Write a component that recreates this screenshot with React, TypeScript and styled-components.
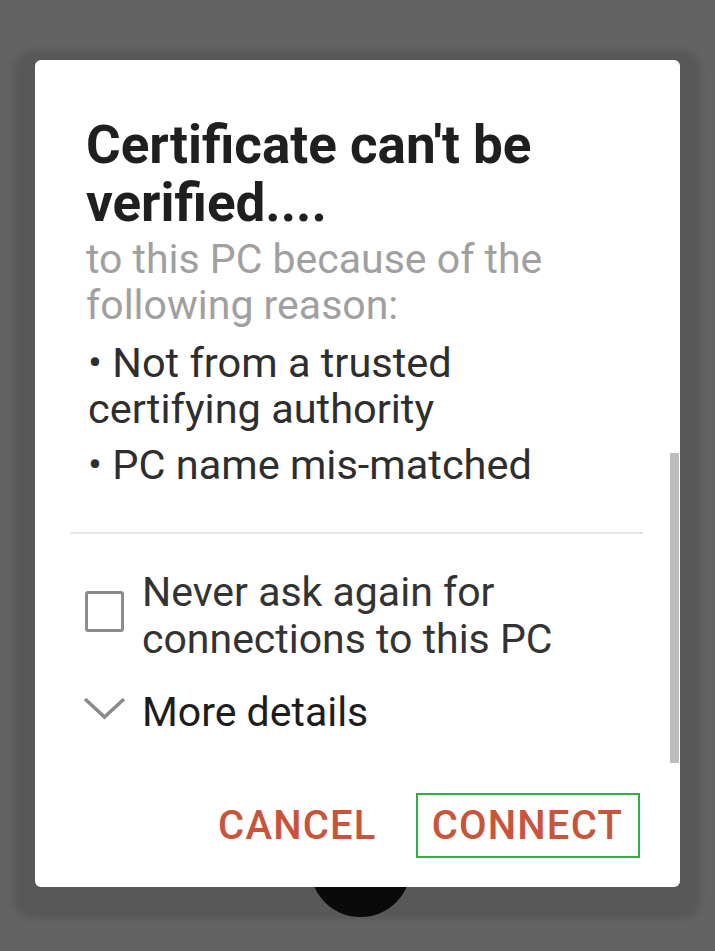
import styled, { createGlobalStyle } from "styled-components";

const GlobalStyle = createGlobalStyle`
  html, body {
    margin: 0;
    padding: 0;
    background: #636363;
    font-family: Roboto, "Noto Sans", "Liberation Sans", sans-serif;
  }
`;

const Screen = styled.div`
  position: relative;
  width: 715px;
  height: 951px;
  overflow: hidden;
  padding: 60px 0 0 35px;
  box-sizing: border-box;
`;

// FAB peeking out underneath the dialog
const Fab = styled.div`
  position: absolute;
  left: 310px;
  top: 816px;
  width: 101px;
  height: 101px;
  border-radius: 50%;
  background: #0c0c0c;
`;

const Dialog = styled.div`
  position: relative;
  z-index: 1;
  width: 645px;
  height: 827px;
  background: #fff;
  border-radius: 6px;
  box-shadow: 0 11px 6px 21px rgba(0, 0, 0, 0.11);
  display: flex;
  flex-direction: column;
  box-sizing: border-box;
  padding-top: 56px;
`;

const ScrollThumb = styled.div`
  position: absolute;
  right: 1px;
  top: 393px;
  width: 9px;
  height: 310px;
  background: #bdbdbd;
`;

const Body = styled.div`
  padding: 0 90px 0 51px;
`;

const Title = styled.h1`
  margin: 0;
  font-size: 53px;
  line-height: 58px;
  font-weight: 700;
  color: #1f1f1f;
`;

const Lead = styled.p`
  margin: 4px 0 0;
  font-size: 41px;
  line-height: 46px;
  color: #a0a0a0;
`;

const Reasons = styled.ul`
  list-style: none;
  margin: 12px 0 0;
  padding: 0 0 0 2px;
  display: flex;
  flex-direction: column;
  gap: 10px;
`;

const Reason = styled.li`
  font-size: 41.5px;
  line-height: 46px;
  color: #2e2e2e;
`;

const Divider = styled.hr`
  margin: 44px 37px 0 35px;
  border: none;
  height: 2px;
  background: #e4e4e4;
`;

const Options = styled.div`
  padding: 35px 0 0 50px;
  display: flex;
  flex-direction: column;
  gap: 26px;
`;

const OptionRow = styled.label<{ $dark?: boolean }>`
  display: flex;
  align-items: flex-start;
  gap: 18px;
  font-size: 41px;
  line-height: 47px;
  color: ${(p) => (p.$dark ? "#1c1c1c" : "#333")};
`;

const Check = styled.span`
  flex: none;
  margin-top: 22px;
  width: 33px;
  height: 35px;
  border: 3px solid #8c8c8c;
  border-radius: 3px;
`;

const Chevron = styled.svg`
  flex: none;
  width: 43px;
  height: 24px;
  margin: 7px -2px 0 -2px;
`;

const Actions = styled.div`
  margin-top: auto;
  display: flex;
  justify-content: flex-end;
  gap: 22px;
  padding: 0 40px 29px 0;
`;

const Button = styled.button<{ $focused?: boolean }>`
  background: none;
  border: 2px solid ${(p) => (p.$focused ? "#2bb04a" : "transparent")};
  padding: 0 15px 0 14px;
  height: 65px;
  font-family: Roboto, "Noto Sans", sans-serif;
  font-size: 40px;
  font-weight: 500;
  color: #c8553b;
  letter-spacing: 1.2px;
`;

export default function App() {
  return (
    <>
      <GlobalStyle />
      <Screen>
        <Fab />
        <Dialog>
          <ScrollThumb />
          <Body>
            <Title>Certificate can't be verified....</Title>
            <Lead>to this PC because of the following reason:</Lead>
            <Reasons>
              <Reason>• Not from a trusted certifying authority</Reason>
              <Reason>• PC name mis-matched</Reason>
            </Reasons>
          </Body>
          <Divider />
          <Options>
            <OptionRow>
              <Check />
              <span>
                Never ask again for
                <br />
                connections to this PC
              </span>
            </OptionRow>
            <OptionRow $dark>
              <Chevron viewBox="0 0 43 24">
                <polyline
                  points="2,3 21.5,21 41,3"
                  fill="none"
                  stroke="#8a8a8a"
                  strokeWidth="3.5"
                />
              </Chevron>
              <span>More details</span>
            </OptionRow>
          </Options>
          <Actions>
            <Button>CANCEL</Button>
            <Button $focused>CONNECT</Button>
          </Actions>
        </Dialog>
      </Screen>
    </>
  );
}
